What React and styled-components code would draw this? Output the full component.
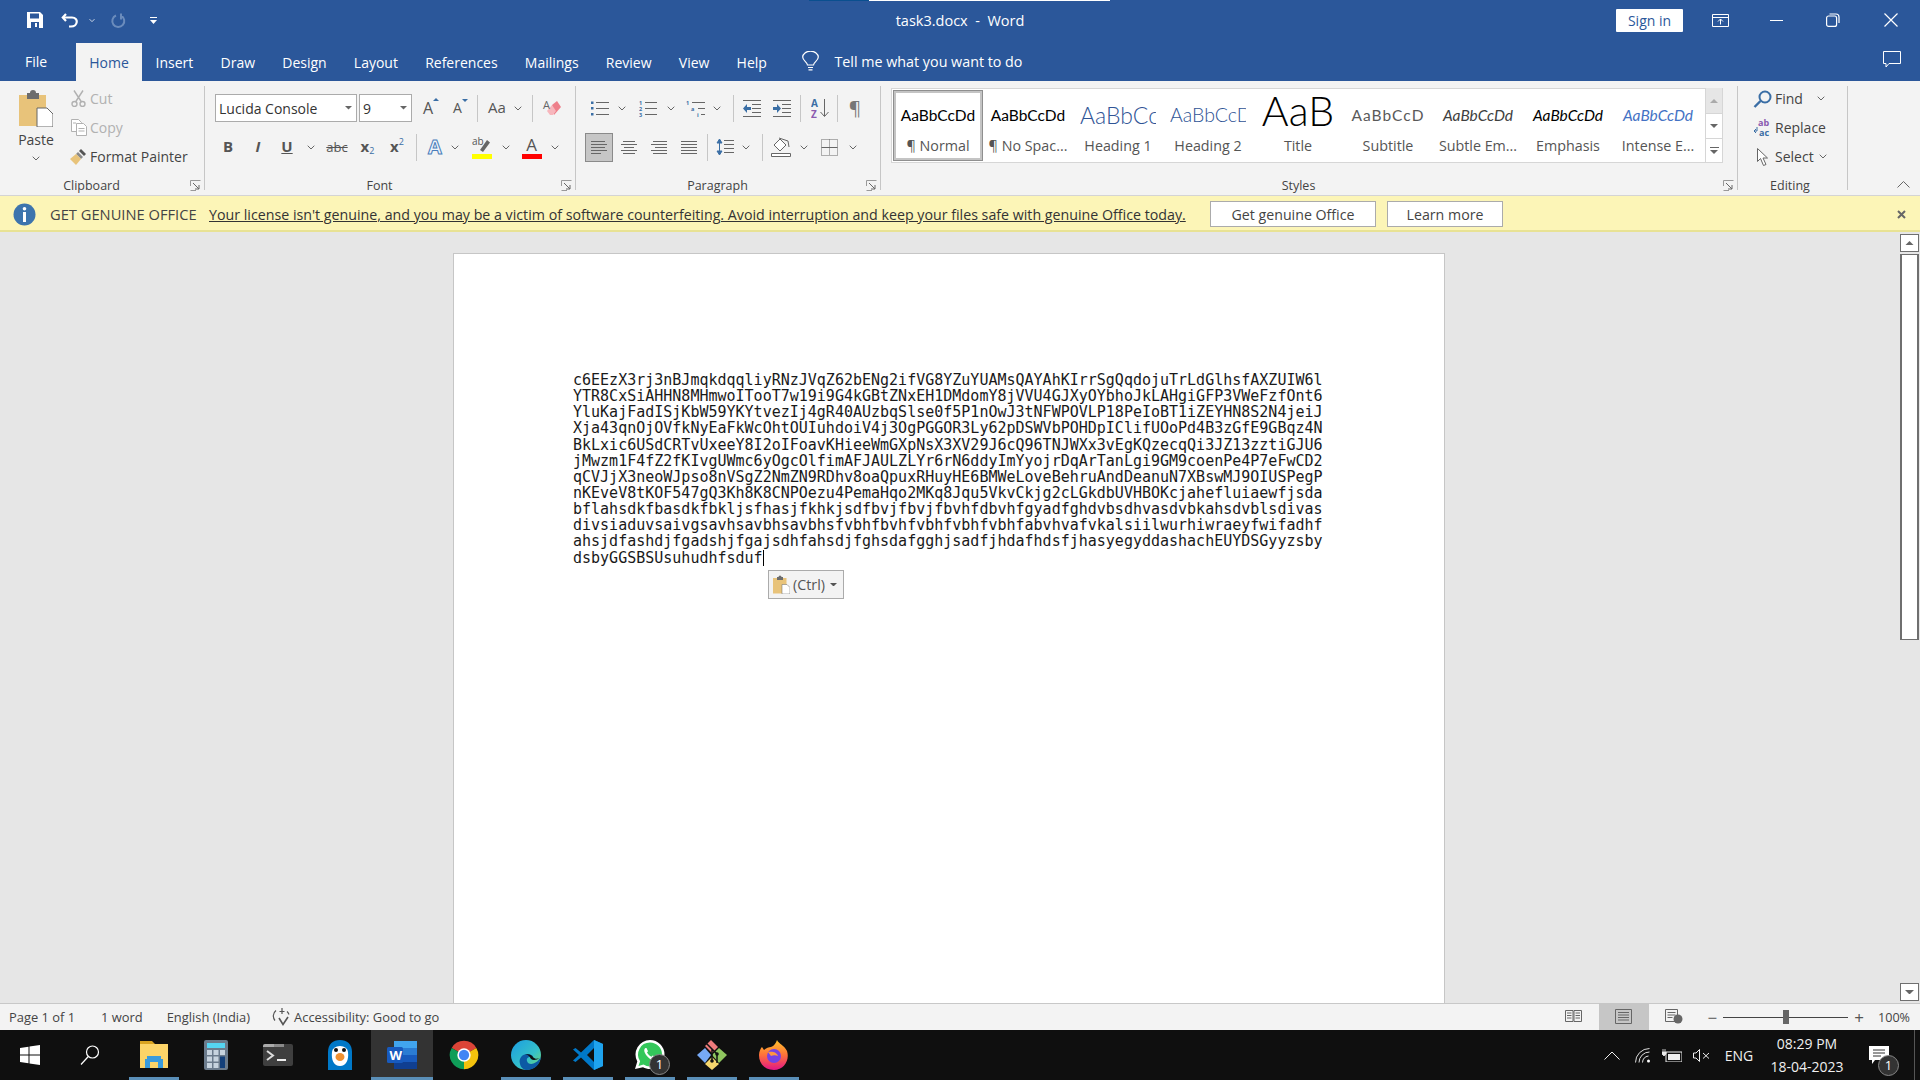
import React from 'react';
import styled, { createGlobalStyle } from 'styled-components';

const GlobalStyle = createGlobalStyle`
  html, body { margin: 0; padding: 0; background: #e6e6e6; }
  * { box-sizing: border-box; }
`;

const DOC_LINES = [
  'c6EEzX3rj3nBJmqkdqqliyRNzJVqZ62bENg2ifVG8YZuYUAMsQAYAhKIrrSgQqdojuTrLdGlhsfAXZUIW6l',
  'YTR8CxSiAHHN8MHmwoITooT7w19i9G4kGBtZNxEH1DMdomY8jVVU4GJXyOYbhoJkLAHgiGFP3VWeFzfOnt6',
  'YluKajFadISjKbW59YKYtvezIj4gR40AUzbqSlse0f5P1nOwJ3tNFWPOVLP18PeIoBT1iZEYHN8S2N4jeiJ',
  'Xja43qnOjOVfkNyEaFkWcOhtOUIuhdoiV4j3OgPGGOR3Ly62pDSWVbPOHDpIClifUOoPd4B3zGfE9GBqz4N',
  'BkLxic6USdCRTvUxeeY8I2oIFoavKHieeWmGXpNsX3XV29J6cQ96TNJWXx3vEgKQzecqQi3JZ13zztiGJU6',
  'jMwzm1F4fZ2fKIvgUWmc6yOgcOlfimAFJAULZLYr6rN6ddyImYyojrDqArTanLgi9GM9coenPe4P7eFwCD2',
  'qCVJjX3neoWJpso8nVSgZ2NmZN9RDhv8oaQpuxRHuyHE6BMWeLoveBehruAndDeanuN7XBswMJ9OIUSPegP',
  'nKEveV8tKOF547gQ3Kh8K8CNPOezu4PemaHqo2MKq8Jqu5VkvCkjg2cLGkdbUVHBOKcjahefluiaewfjsda',
  'bflahsdkfbasdkfbkljsfhasjfkhkjsdfbvjfbvjfbvhfdbvhfgyadfghdvbsdhvasdvbkahsdvblsdivas',
  'divsiaduvsaivgsavhsavbhsavbhsfvbhfbvhfvbhfvbhfvbhfabvhvafvkalsiilwurhiwraeyfwifadhf',
  'ahsjdfashdjfgadshjfgajsdhfahsdjfghsdafgghjsadfjhdafhdsfjhasyegyddashachEUYDSGyyzsby',
];

const TABS = ['Insert', 'Draw', 'Design', 'Layout', 'References', 'Mailings', 'Review', 'View', 'Help'];

const STYLES = [
  { name: '¶ Normal', kind: 'normal', selected: true },
  { name: '¶ No Spac...', kind: 'normal' },
  { name: 'Heading 1', kind: 'h1', text: 'AaBbCc' },
  { name: 'Heading 2', kind: 'h2', text: 'AaBbCcD' },
  { name: 'Title', kind: 'title', text: 'AaB' },
  { name: 'Subtitle', kind: 'subtitle', text: 'AaBbCcD' },
  { name: 'Subtle Em...', kind: 'subtle' },
  { name: 'Emphasis', kind: 'emphasis' },
  { name: 'Intense E...', kind: 'intense' },
];

const Page = styled.div`
  width: 1920px;
  height: 1080px;
  display: flex;
  flex-direction: column;
  overflow: hidden;
  font-family: 'Open Sans', 'Noto Sans', sans-serif;
  font-size: 14px;
  color: #444;
`;

/* title bar */
const TitleBar = styled.div`
  position: relative;
  height: 43px;
  flex: none;
  background: #2b579a;
  color: #fff;
  display: grid;
  grid-template-columns: 1fr auto 1fr;
  align-items: center;
  padding-bottom: 3px;
`;

const LoadStrip = styled.div`
  position: absolute;
  top: 0;
  left: 809px;
  width: 301px;
  height: 1px;
  background: linear-gradient(90deg, #0a4f8f 60px, #fff 60px);
`;

const QuickAccess = styled.div`
  display: flex;
  align-items: center;
  padding-left: 19px;
`;

const QuickBtn = styled.div`
  width: ${p => p.$w}px;
  display: flex;
  justify-content: center;
  align-items: center;
`;

const DocTitle = styled.div`
  white-space: pre;
  font-size: 14.5px;
`;

const WindowControls = styled.div`
  display: flex;
  justify-content: flex-end;
  align-items: center;
`;

const SignIn = styled.div`
  width: 67px;
  height: 23px;
  background: #fff;
  color: #2b579a;
  border-radius: 1px;
  text-align: center;
  line-height: 24px;
  font-size: 14px;
  margin-right: 29px;
`;

const WinBtn = styled.div`
  width: ${p => p.$w}px;
  margin-left: ${p => p.$ml || 0}px;
  display: flex;
  justify-content: center;
`;

/* tab row */
const TabBar = styled.div`
  height: 38px;
  flex: none;
  background: #2b579a;
  display: flex;
  align-items: stretch;
  color: #fff;
`;

const FileTab = styled.div`
  width: 76px;
  padding: 0 0 2px 25px;
  display: flex;
  align-items: center;
  font-size: 14px;
`;

const ActiveTab = styled.div`
  width: 66px;
  background: #f3f3f3;
  color: #2b579a;
  display: flex;
  align-items: center;
  justify-content: center;
`;

const Tab = styled.div`
  padding: 0 13.6px;
  display: flex;
  align-items: center;
  font-size: 14px;
`;

const TellMe = styled.div`
  display: flex;
  align-items: center;
  gap: 15px;
  margin-left: 22px;
  padding-bottom: 2px;
  font-size: 14.3px;
`;

const CommentBox = styled.div`
  margin-left: auto;
  padding: 0 19px 5px 0;
  display: flex;
  align-items: center;
`;

/* ribbon */
const Ribbon = styled.div`
  height: 115px;
  flex: none;
  background: #f3f3f3;
  border-bottom: 1px solid #d4d4d4;
  display: flex;
  align-items: flex-start;
`;

const Group = styled.div`
  width: ${p => p.$w}px;
  height: 104px;
  margin-top: 5px;
  flex: none;
  display: flex;
  flex-direction: column;
  border-right: 1px solid #c6c6c6;
`;

const GroupBody = styled.div`
  flex: 1;
  min-height: 0;
  display: flex;
`;

const GroupFooter = styled.div`
  height: 16px;
  margin-bottom: -3px;
  flex: none;
  display: flex;
  align-items: center;
  line-height: 16px;
  font-size: 12.5px;
  color: #444;
`;

const GroupName = styled.div`
  flex: 1;
  text-align: center;
  padding: 2px 5px 0 0;
`;

const Launcher = styled.div`
  width: 14px;
  margin-right: 2px;
  display: flex;
  justify-content: center;
`;

const PasteBtn = styled.div`
  width: 60px;
  margin-left: 6px;
  padding-top: 3px;
  display: flex;
  flex-direction: column;
  align-items: center;
  font-size: 14px;
  line-height: 18px;
  color: #444;
`;

const PasteLabel = styled.div`
  margin: 4px 0 7px;
`;

const SmallCol = styled.div`
  display: flex;
  flex-direction: column;
  margin-top: -2px;
  padding-left: ${p => p.$pl || 0}px;
`;

const SmallRow = styled.div`
  height: 29px;
  display: flex;
  align-items: center;
  white-space: nowrap;
  font-size: 14px;
  color: ${p => (p.$off ? '#b1b1b1' : '#444')};
`;

const SmallIcon = styled.div`
  width: ${p => p.$w || 23}px;
  flex: none;
  display: flex;
  justify-content: center;
`;

const ToolCol = styled.div`
  display: flex;
  flex-direction: column;
  padding: 8px 0 0 ${p => p.$pl}px;
  gap: 11px;
`;

const ToolRow = styled.div`
  height: 28px;
  margin-left: ${p => p.$ml || 0}px;
  display: flex;
  align-items: center;
`;

const Cell = styled.div`
  width: ${p => p.$w}px;
  height: 28px;
  flex: none;
  display: flex;
  align-items: center;
  justify-content: center;
  color: #555;
`;

const ActiveCell = styled(Cell)`
  height: 29px;
  margin-right: 1px;
  background: #c6c6c6;
  border: 1px solid #8a8a8a;
`;

const VSep = styled.div`
  width: 1px;
  height: 27px;
  flex: none;
  background: #c6c6c6;
  margin: 0 ${p => p.$r ?? 6}px 0 ${p => p.$l ?? 6}px;
`;

const ComboBox = styled.div`
  width: ${p => p.$w}px;
  height: 28px;
  margin-right: ${p => p.$mr || 0}px;
  flex: none;
  background: #fff;
  border: 1px solid #ababab;
  display: flex;
  align-items: center;
  justify-content: space-between;
  padding: 0 4px 0 3px;
  font-size: 14px;
  color: #333;
`;

const Letter = styled.span`
  font-size: ${p => p.$size || 15}px;
  font-weight: ${p => (p.$bold ? 700 : 400)};
  font-style: ${p => (p.$italic ? 'italic' : 'normal')};
  text-decoration: ${p => p.$deco || 'none'};
  color: ${p => p.$color || '#555'};
  line-height: 1.3;
`;

const SizeGlyph = styled.span`
  display: inline-flex;
  align-items: flex-start;
`;

const Outlined = styled.span`
  font-size: 20px;
  font-weight: 700;
  line-height: 1.3;
  color: #eef4fb;
  -webkit-text-stroke: 1px #4a7ebb;
`;

const Sup = styled.span`
  font-size: 9px;
  line-height: 1.2;
  color: #3a6ea5;
  align-self: ${p => (p.$up ? 'flex-start' : 'flex-end')};
`;

const ScriptGlyph = styled.span`
  display: inline-flex;
  height: 20px;
  align-items: center;
`;

const ColorGlyph = styled.div`
  display: flex;
  flex-direction: column;
  align-items: center;
  width: 20px;
  line-height: 1;
`;

const ColorLetter = styled.span`
  font-size: 17px;
  line-height: 18px;
  color: #555;
`;

const ColorBar = styled.div`
  width: 20px;
  height: 5px;
  background: ${p => p.$color};
`;

/* styles gallery */
const Gallery = styled.div`
  width: 832px;
  height: 75px;
  margin: 2px 0 0 10px;
  background: #fff;
  border: 1px solid #d6d6d6;
  display: flex;
  padding: 1px 0 1px 1px;
`;

const StyleItem = styled.div`
  width: 90px;
  height: 71px;
  flex: none;
  display: flex;
  flex-direction: column;
  align-items: center;
  border: 3px solid ${p => (p.$selected ? '#c4c4c4' : 'transparent')};
  outline: ${p => (p.$selected ? '1px solid #8f8f8f' : 'none')};
  outline-offset: -1px;
`;

const PREVIEW = {
  normal: 'font-size: 15.5px; color: #000;',
  h1: 'font-size: 23px; color: #2f5496; font-weight: 300;',
  h2: 'font-size: 19.5px; color: #2f5496; font-weight: 300;',
  title: 'font-size: 41px; color: #000; font-weight: 300; line-height: 35px;',
  subtitle: 'font-size: 15.5px; color: #5a5a5a; letter-spacing: 1px;',
  subtle: 'font-size: 15.5px; color: #404040; font-style: italic;',
  emphasis: 'font-size: 15.5px; color: #000; font-style: italic;',
  intense: 'font-size: 15.5px; color: #4472c4; font-style: italic;',
};

const Preview = styled.div`
  width: 76px;
  height: 42px;
  overflow: hidden;
  white-space: nowrap;
  font-family: Lato, 'Open Sans', sans-serif;
  line-height: 44px;
  text-align: center;
  ${p => PREVIEW[p.$kind]}
`;

const StyleName = styled.div`
  font-size: 14.3px;
  color: #555;
  white-space: nowrap;
  line-height: 20px;
  margin-top: 1px;
`;

const GalleryScroll = styled.div`
  margin: -2px -1px -2px auto;
  width: 18px;
  flex: none;
  display: flex;
  flex-direction: column;
  border-left: 1px solid #d6d6d6;
  border-right: 1px solid #d6d6d6;
`;

const ScrollPart = styled.div`
  flex: ${p => p.$grow || 1};
  display: flex;
  flex-direction: column;
  gap: 2px;
  align-items: center;
  justify-content: center;
  background: ${p => (p.$off ? '#e6e6e6' : '#fff')};
  border-bottom: 1px solid #d6d6d6;
`;

const MoreLine = styled.div`
  width: 9px;
  height: 1px;
  background: #666;
`;

const CollapseRibbon = styled.div`
  flex: 1;
  height: 110px;
  display: flex;
  align-items: flex-end;
  justify-content: flex-end;
  padding: 0 10px 3px 0;
`;

/* genuine office banner */
const Banner = styled.div`
  height: 36px;
  flex: none;
  background: #fcf5b7;
  border-bottom: 2px solid #e8e294;
  display: flex;
  align-items: center;
  padding: 2px 14px 0 13px;
  color: #444;
`;

const BannerTitle = styled.div`
  width: 147px;
  margin: 0 12px 0 14px;
  white-space: nowrap;
  color: #444;
  font-size: 14.7px;
`;

const BannerLink = styled.div`
  width: 977px;
  white-space: nowrap;
  color: #333;
  text-decoration: underline;
  font-size: 14.23px;
`;

const BannerButton = styled.div`
  width: ${p => p.$w}px;
  height: 26px;
  margin-left: ${p => p.$ml}px;
  background: #fff;
  border: 1px solid #ababab;
  text-align: center;
  line-height: 25px;
  font-size: 14.2px;
  color: #444;
`;

const BannerClose = styled.div`
  margin-left: auto;
  display: flex;
`;

/* document */
const Workspace = styled.div`
  flex: 1;
  min-height: 0;
  display: flex;
  background: #e6e6e6;
`;

const Canvas = styled.div`
  flex: 1;
  padding: 21px 0 0 453px;
  overflow: hidden;
`;

const Sheet = styled.div`
  position: relative;
  width: 992px;
  height: 100%;
  background: #fff;
  border: 1px solid #c6c6c6;
  border-bottom: none;
  padding: 118px 0 0 119px;
`;

const DocLine = styled.div`
  font-family: 'DejaVu Sans Mono', 'Liberation Mono', monospace;
  font-size: 15px;
  line-height: 16.15px;
  color: #1a1a1a;
  white-space: pre;
  height: 16.15px;
`;

const Caret = styled.span`
  display: inline-block;
  width: 1px;
  height: 16px;
  background: #000;
  vertical-align: -3px;
`;

const PasteOptions = styled.div`
  position: absolute;
  left: 314px;
  top: 316px;
  width: 76px;
  height: 29px;
  background: #f3f3f3;
  border: 1px solid #ababab;
  display: flex;
  align-items: center;
  gap: 3px;
  padding-left: 4px;
  font-size: 14.3px;
  color: #555;
`;

const PasteCaret = styled.span`
  display: flex;
  margin-left: 2px;
`;

const Scrollbar = styled.div`
  width: 19px;
  margin-right: 1px;
  flex: none;
  display: flex;
  flex-direction: column;
  padding: 2px 0;
`;

const ScrollArrow = styled.div`
  height: 18px;
  flex: none;
  background: #fff;
  border: 1px solid #6f6f6f;
  display: flex;
  align-items: center;
  justify-content: center;
`;

const ScrollThumb = styled.div`
  height: 386px;
  flex: none;
  margin-top: 2px;
  background: #fff;
  border: solid #6f6f6f;
  border-width: 1px 2px;
`;

const ScrollTrack = styled.div`
  flex: 1;
`;

/* status bar */
const StatusBar = styled.div`
  height: 27px;
  flex: none;
  background: #f3f3f3;
  border-top: 1px solid #c8c8c8;
  display: flex;
  align-items: stretch;
  font-size: 12.9px;
  color: #444;
`;

const StatusText = styled.div`
  display: flex;
  align-items: center;
  gap: 2px;
  margin-left: ${p => p.$ml}px;
  white-space: nowrap;
`;

const StatusRight = styled.div`
  margin-left: auto;
  display: flex;
  align-items: stretch;
`;

const ViewBtn = styled.div`
  width: 50px;
  margin-top: -1px;
  display: flex;
  align-items: center;
  justify-content: center;
  background: ${p => (p.$active ? '#c6c6c6' : 'transparent')};
`;

const ZoomBox = styled.div`
  display: flex;
  align-items: center;
  padding: 0 10px 0 9px;
  gap: 6px;
`;

const ZoomSign = styled.span`
  font-size: 17px;
  line-height: 1;
  color: #555;
`;

const ZoomTrack = styled.div`
  width: 125px;
  height: 1px;
  background: #444;
  display: flex;
  align-items: center;
  padding-left: 60px;
`;

const ZoomThumb = styled.div`
  width: 6px;
  height: 14px;
  flex: none;
  background: #666;
`;

const ZoomValue = styled.div`
  margin-left: 8px;
  font-size: 12.6px;
`;

/* taskbar */
const Taskbar = styled.div`
  height: 50px;
  flex: none;
  background: #0f0f0f;
  display: flex;
  align-items: stretch;
  color: #f0f0f0;
`;

const TaskSlot = styled.div`
  position: relative;
  width: ${p => p.$w || 62}px;
  flex: none;
  display: flex;
  align-items: center;
  justify-content: center;
  background: ${p => (p.$active ? '#333' : 'transparent')};
  ${p =>
    p.$open
      ? `background-image: linear-gradient(#5a8fb8, #5a8fb8);
         background-repeat: no-repeat;
         background-position: center bottom;
         background-size: ${p.$active ? '100%' : '50px'} 3px;`
      : ''}
`;

const SlotGap = styled.div`
  width: 3px;
  flex: none;
`;

const CountBadge = styled.div`
  position: absolute;
  width: 21px;
  height: 21px;
  left: ${p => p.$left}px;
  top: ${p => p.$top}px;
  border-radius: 50%;
  background: #333;
  border: 1px solid #888;
  color: #fff;
  font-size: 13px;
  line-height: 19px;
  text-align: center;
`;

const Tray = styled.div`
  margin-left: auto;
  display: flex;
  align-items: center;
`;

const TrayIcon = styled.div`
  width: ${p => p.$w}px;
  display: flex;
  justify-content: center;
`;

const TrayLang = styled.div`
  width: 36px;
  text-align: center;
  font-size: 14px;
  white-space: nowrap;
`;

const Clock = styled.div`
  width: 100px;
  text-align: center;
  font-size: 14px;
  line-height: 23px;
`;

const Notify = styled.div`
  position: relative;
  width: 44px;
  height: 100%;
  margin-right: 13px;
  display: flex;
  align-items: center;
  justify-content: center;
`;

const ShowDesktop = styled.div`
  width: 6px;
  height: 100%;
  border-left: 1px solid #555;
`;

/* icons */
const Chevron = ({ color = '#666' }) => (
  <svg width="8" height="5" viewBox="0 0 8 5"><path d="M.7.7 4 4 7.3.7" fill="none" stroke={color} /></svg>
);

const Tri = ({ color = '#666', up, w = 8 }) => (
  <svg width={w} height={w / 2} viewBox="0 0 8 4"><path d={up ? 'M0 4 4 0l4 4z' : 'M0 0h8L4 4z'} fill={color} /></svg>
);

const LauncherIcon = () => (
  <svg width="11" height="11" viewBox="0 0 11 11" fill="none" stroke="#666">
    <path d="M.5 6V.5H10.500M.5 10.500H6" stroke="#999" />
    <path d="M3 3 9 9M9 5v4H5" />
  </svg>
);

const SaveIcon = () => (
  <svg width="16" height="16" viewBox="0 0 16 16">
    <path d="M0 0h13l3 3v13H0z" fill="#fff" />
    <path d="M3 1.500h9v5H3z" fill="#2b579a" />
    <path d="M4 10h8v6H4z" fill="#2b579a" />
    <path d="M8 11h2v4H8z" fill="#fff" />
  </svg>
);

const UndoIcon = () => (
  <svg width="18" height="16" viewBox="0 0 18 16" fill="none" stroke="#fff" strokeWidth="2.200">
    <path d="M5 2 1.800 5.500 5 9" />
    <path d="M2 5.500h9c7 0 6 9-1 9H8" />
  </svg>
);

const RedoIcon = () => (
  <svg width="17" height="17" viewBox="0 0 17 17" fill="none" stroke="#6b8cbc" strokeWidth="2">
    <path d="M11 1.500v5h-1M6 3.500a6 6 0 1 0 5 .2" />
  </svg>
);

const CustomizeIcon = () => (
  <svg width="7" height="7" viewBox="0 0 7 7" fill="#fff"><path d="M0 0h7v1H0zM0 3h7L3.500 7z" /></svg>
);

const RibbonModeIcon = () => (
  <svg width="17" height="13" viewBox="0 0 17 13" fill="none" stroke="#fff">
    <path d="M.5.500h16v12H.5zM.5 3.500h16" />
    <path d="M8.500 10.500V5M6 7.500l2.500-2.500L11 7.500" />
  </svg>
);

const MinIcon = () => <svg width="13" height="13" viewBox="0 0 13 13"><path d="M0 6.500h13" stroke="#fff" /></svg>;

const RestoreIcon = () => (
  <svg width="14" height="14" viewBox="0 0 14 14" fill="none" stroke="#fff" strokeWidth="1.200">
    <rect x=".6" y="3" width="10" height="10.400" rx="2" />
    <path d="M3.500 1h6.500a3 3 0 0 1 3 3v6" />
  </svg>
);

const CloseIcon = () => (
  <svg width="14" height="14" viewBox="0 0 14 14"><path d="M.5.500l13 13M13.500.500l-13 13" stroke="#fff" strokeWidth="1.200" /></svg>
);

const BulbIcon = () => (
  <svg width="17" height="20" viewBox="0 0 17 20" fill="none" stroke="#fff" strokeWidth="1.200">
    <path d="M5.500 14c0-3-4.800-4-4.800-8a7.800 5.800 0 0 1 15.600 0c0 4-4.800 5-4.800 8z" />
    <path d="M6 16.500h5M6.500 18.800h4" />
  </svg>
);

const CommentIcon = () => (
  <svg width="18" height="17" viewBox="0 0 18 17" fill="none" stroke="#fff"><path d="M.5.500h17v12H6L3 16v-3.500H.5z" /></svg>
);

const PasteIcon = ({ small }) => (
  <svg width={small ? 17 : 34} height={small ? 19 : 38} viewBox="0 0 34 38">
    <path d="M0 6h27v31H0z" fill="#e8c37a" />
    <path d="M8 4h3a3 3 0 0 1 6 0h3v6H8z" fill="#6d6d6d" />
    <path d="M18 19h10l6 6v13H18z" fill="#fff" stroke="#666" />
  </svg>
);

const ScissorsIcon = () => (
  <svg width="15" height="17" viewBox="0 0 15 17" fill="none" stroke="#b1b1b1" strokeWidth="1.400">
    <circle cx="3.500" cy="14" r="2.500" />
    <circle cx="11.500" cy="14" r="2.500" />
    <path d="M4.500 12 12 .5M10.500 12 3 .5" />
  </svg>
);

const CopyIcon = () => (
  <svg width="16" height="17" viewBox="0 0 16 17" fill="#fff" stroke="#b1b1b1">
    <path d="M.5.500h7l3 3v9h-10z" />
    <path d="M5.500 4.500h7l3 3v9h-10zM7.500 9.500h6M7.500 12h6M2 4h3" />
  </svg>
);

const BrushIcon = () => (
  <svg width="18" height="18" viewBox="0 0 18 18">
    <path d="M11 1l5 5-2 2-5-5z" fill="#555" />
    <path d="M8 4l5 5-2 2-5-5z" fill="#8a8a8a" />
    <path d="M6 6l5 5-5 6-6-6z" fill="#e8c37a" />
  </svg>
);

const ClearFormatIcon = () => (
  <svg width="19" height="22" viewBox="0 0 19 22">
    <path d="M10 8l5-4 4 6-7 8z" fill="#ee7f8a" />
    <path d="M5 14l5-6 4 6-3 4H8z" fill="#f7b6bc" />
    <text x="1" y="12" fontSize="11" fill="#666" fontFamily="Open Sans">A</text>
  </svg>
);

const BulletsIcon = () => (
  <svg width="19" height="17" viewBox="0 0 19 17">
    <path d="M1 1.500h2.500v2.500H1zM1 7h2.500v2.500H1zM1 13h2.500v2.500H1z" fill="#3a6ea5" />
    <path d="M6 2.500h13M6 8.500h13M6 14.500h13" stroke="#666" />
  </svg>
);

const NumberingIcon = () => (
  <svg width="18" height="21" viewBox="0 0 18 21">
    <g fontSize="5.500" fontWeight="700" fill="#3a6ea5" fontFamily="Open Sans">
      <text x="0" y="7">1</text><text x="0" y="13">2</text><text x="0" y="19">3</text>
    </g>
    <path d="M6 4.500h12M6 10.500h12M6 16.500h12" stroke="#666" />
  </svg>
);

const MultilevelIcon = () => (
  <svg width="19" height="21" viewBox="0 0 19 21">
    <g fontSize="5.500" fontWeight="700" fill="#3a6ea5" fontFamily="Open Sans">
      <text x="0" y="7">1</text><text x="5" y="13">a</text><text x="11" y="19">i</text>
    </g>
    <path d="M6 4.500h13M12 10.500h7M15 16.500h4" stroke="#666" />
  </svg>
);

const IndentIcon = ({ flip }) => (
  <svg width="18" height="17" viewBox="0 0 18 17">
    <path d="M0 .500h18M9 4.500h9M9 8.500h9M9 12.500h9M0 16.500h18" stroke="#666" />
    {flip
      ? <path d="M0 7h4V4l4 4.500-4 4.500v-3H0z" fill="#3a6ea5" />
      : <path d="M8 7H4V4L0 8.500 4 13v-3h4z" fill="#3a6ea5" />}
  </svg>
);

const SortIcon = () => (
  <svg width="18" height="24" viewBox="0 0 18 24">
    <text x="0" y="11" fontSize="10" fontWeight="700" fill="#3a6ea5" fontFamily="Open Sans">A</text>
    <text x="0" y="22" fontSize="10" fontWeight="700" fill="#8a5aaf" fontFamily="Open Sans">Z</text>
    <path d="M13.500 3v17M9.500 16l4 4.500 4-4.500" fill="none" stroke="#666" />
  </svg>
);

const AlignIcon = ({ kind }) => {
  const rows = { left: [14, 18, 14, 18, 10], center: [12, 16, 10, 16, 12], right: [14, 16, 12, 16, 14], justify: [16, 16, 16, 16, 16] }[kind];
  return (
    <svg width="16" height="15" viewBox="0 0 16 15">
      {rows.map((w, i) => {
        const x = kind === 'left' ? 0 : kind === 'right' ? 16 - w : (16 - w) / 2;
        return <path key={i} d={`M${x} ${1.5 + i * 3}h${w}`} stroke="#666" />;
      })}
    </svg>
  );
};

const LineSpacingIcon = () => (
  <svg width="18" height="18" viewBox="0 0 18 18">
    <path d="M3.500 5v8M1 5l2.500-4L6 5zM1 13l2.500 4L6 13z" fill="#3a6ea5" stroke="#3a6ea5" />
    <path d="M8 2.500h10M8 6.500h10M8 10.500h10M8 14.500h10" stroke="#666" />
  </svg>
);

const ShadingIcon = () => (
  <svg width="20" height="20" viewBox="0 0 20 20" fill="none" stroke="#666">
    <path d="M3 8l6-6 6 6-6 6z" fill="#fff" />
    <path d="M8 1l9 3 1 6" />
    <path d="M.5 16.500h19v3H.5z" fill="#fff" />
  </svg>
);

const BordersIcon = () => (
  <svg width="17" height="17" viewBox="0 0 17 17" fill="none" stroke="#666" strokeDasharray="1 1">
    <path d="M.5.500h16v16H.5zM8.500.500v16" />
    <path d="M.5 8.500h16" strokeDasharray="none" />
  </svg>
);

const HighlightIcon = () => (
  <svg width="20" height="24" viewBox="0 0 20 24">
    <text x="0" y="10" fontSize="10" fill="#555" fontFamily="Open Sans">ab</text>
    <path d="M8 15 15 5l3 2.500L11 17z" fill="#666" />
    <path d="M0 19h20v5H0z" fill="#ffff00" />
  </svg>
);

const FindIcon = () => (
  <svg width="19" height="18" viewBox="0 0 19 18" fill="none" stroke="#3a6ea5" strokeWidth="2">
    <circle cx="12" cy="7" r="5.500" />
    <path d="M7.500 11 1.500 17" strokeWidth="2.400" />
  </svg>
);

const ReplaceIcon = () => (
  <svg width="20" height="22" viewBox="0 0 20 22">
    <text x="5" y="9" fontSize="9" fontWeight="700" fill="#8a5aaf" fontFamily="Open Sans">ab</text>
    <text x="6" y="19" fontSize="9" fontWeight="700" fill="#3a6ea5" fontFamily="Open Sans">ac</text>
    <path d="M4 10v4H1M1 14l2-2M1 14l2 2" fill="none" stroke="#3a6ea5" />
  </svg>
);

const CursorIcon = () => (
  <svg width="12" height="18" viewBox="0 0 12 18"><path d="M.5.500v13l3-3 3 7 2.500-1-3-6.500h4.500z" fill="#fff" stroke="#666" /></svg>
);

const InfoIcon = () => (
  <svg width="23" height="23" viewBox="0 0 23 23">
    <circle cx="11.500" cy="11.500" r="11" fill="#3d74ad" />
    <path d="M10 9h3v10h-3z" fill="#fff" />
    <circle cx="11.500" cy="5.800" r="1.800" fill="#fff" />
  </svg>
);

const BannerX = () => (
  <svg width="9" height="9" viewBox="0 0 9 9"><path d="M1 1l7 7M8 1 1 8" stroke="#666" strokeWidth="2" /></svg>
);

const CollapseIcon = () => (
  <svg width="13" height="7" viewBox="0 0 13 7"><path d="M.5 6.500l6-6 6 6" fill="none" stroke="#666" /></svg>
);

const AccessibilityIcon = () => (
  <svg width="20" height="18" viewBox="0 0 20 18" fill="none" stroke="#555" strokeWidth="1.200">
    <path d="M4 2.500a7 7 0 0 0-1 10M15 3.500a7 7 0 0 1 2 3" />
    <path d="M10 0v6M7.500 3.500h5" />
    <path d="M7 10l4 6.500L16 9" strokeWidth="1.600" />
  </svg>
);

const ReadIcon = () => (
  <svg width="17" height="15" viewBox="0 0 17 15" fill="none" stroke="#666">
    <path d="M.5 1.500h7.500v11H.5zM9 1.500h7.500v11H9zM2 4h4.500M2 6.500h4.500M2 9h4.500M10.500 4H15M10.500 6.500H15M10.500 9H15" />
  </svg>
);

const PrintIcon = () => (
  <svg width="17" height="15" viewBox="0 0 17 15" fill="none" stroke="#666">
    <path d="M.5.500h16v14H.5zM3 3.500h11M3 6h11M3 8.500h11M3 11h11" />
  </svg>
);

const WebIcon = () => (
  <svg width="18" height="15" viewBox="0 0 18 15">
    <path d="M.5.500h12v12H.5zM2.500 3.500h8M2.500 6h8M2.500 8.500h5" fill="none" stroke="#666" />
    <circle cx="13" cy="10" r="4.500" fill="#666" />
  </svg>
);

const WindowsLogo = () => (
  <svg width="20" height="20" viewBox="0 0 20 20" fill="#fff">
    <path d="M0 3l8.500-1.300v7.800H0zM9.500 1.500 20 0v9.500H9.500zM0 10.500h8.500v7.800L0 17zM9.500 10.500H20V20L9.500 18.500z" />
  </svg>
);

const SearchGlyph = () => (
  <svg width="20" height="20" viewBox="0 0 20 20" fill="none" stroke="#fff" strokeWidth="1.200">
    <circle cx="12.500" cy="7" r="6" />
    <path d="M8.300 11.500 1 19.500" />
  </svg>
);

const ExplorerLogo = () => (
  <svg width="28" height="30" viewBox="0 0 28 30">
    <path d="M0 1h12l3 3H0z" fill="#d9a320" />
    <path d="M0 4h28v24H0z" fill="#fcd468" />
    <path d="M7 16h14v3h2v9h-5v-6h-8v6H5v-9h2z" fill="#3a9bdc" />
  </svg>
);

const CalcLogo = () => (
  <svg width="24" height="30" viewBox="0 0 24 30">
    <rect width="24" height="30" rx="2" fill="#6b7b8c" />
    <path d="M3 3h18v5H3z" fill="#55d5f2" />
    <path d="M3 10h5v5H3zM9.500 10h5v5h-5zM16 10h5v5h-5zM3 16.500h5v5H3zM9.500 16.500h5v5h-5zM3 23h5v5H3zM9.500 23h5v5h-5z" fill="#c7d3de" />
    <path d="M16 16.500h5V28h-5z" fill="#123f7a" />
  </svg>
);

const TerminalLogo = () => (
  <svg width="30" height="22" viewBox="0 0 30 22">
    <rect width="30" height="22" rx="2" fill="#3f3f3f" />
    <path d="M0 2a2 2 0 0 1 2-2h9v3H0z" fill="#aaa" />
    <path d="M11 0h10v3H11z" fill="#8a8a8a" />
    <path d="M4 7l6 4.500-6 4.500" fill="none" stroke="#ddd" strokeWidth="2" />
    <path d="M14 15h9v2h-9z" fill="#eee" />
  </svg>
);

const PenguinLogo = () => (
  <svg width="24" height="30" viewBox="0 0 24 30">
    <path d="M0 12C0 4 5 0 12 0s12 4 12 12v18H0z" fill="#0078c8" />
    <path d="M4 12a8 6 0 0 1 16 0c1 8-2 14-8 14S3 20 4 12z" fill="#fff" />
    <circle cx="8" cy="10" r="2" fill="#111" />
    <circle cx="16" cy="10" r="2" fill="#111" />
    <ellipse cx="12" cy="17" rx="4.500" ry="4" fill="#f09030" />
  </svg>
);

const WordLogo = () => (
  <svg width="30" height="30" viewBox="0 0 30 30">
    <path d="M7 1h23v7H7z" fill="#41a5ee" />
    <path d="M7 8h23v7H7z" fill="#2b7cd3" />
    <path d="M7 15h23v7H7z" fill="#185abd" />
    <path d="M7 22h23v7H7z" fill="#103f91" />
    <rect x="0" y="7" width="16" height="16" rx="1.500" fill="#185abd" />
    <text x="2.500" y="20" fontSize="13" fontWeight="700" fill="#fff" fontFamily="Open Sans">W</text>
  </svg>
);

const ChromeLogo = () => (
  <svg width="30" height="30" viewBox="0 0 38 38">
    <path d="M19 19 3.400 10A18 18 0 0 1 34.600 10z" fill="#db4437" />
    <path d="M19 19 34.600 10A18 18 0 0 1 19 37z" fill="#f4c20d" />
    <path d="M19 19V37A18 18 0 0 1 3.400 10z" fill="#0f9d58" />
    <circle cx="19" cy="19" r="8.500" fill="#fff" />
    <circle cx="19" cy="19" r="6.500" fill="#4285f4" />
  </svg>
);

const EdgeLogo = () => (
  <svg width="30" height="30" viewBox="0 0 30 30">
    <defs>
      <linearGradient id="edgeFill" x1="0" y1="0" x2="1" y2="1">
        <stop offset="0" stopColor="#1b9de2" />
        <stop offset="0.6" stopColor="#35c1c9" />
        <stop offset="1" stopColor="#7bdd6b" />
      </linearGradient>
    </defs>
    <circle cx="15" cy="15" r="15" fill="url(#edgeFill)" />
    <path d="M30 17c-1 8-7 13-14 13-3 0-6-2-7-6-2-6 3-10 7-10 4 0 6 2 6 3-4-1-7 1-6 4 1 4 8 5 14-4z" fill="#0c59a4" />
    <path d="M14 14c4 0 7 1 8 3 2 3 8 2 8-2 0 2-3 5-7 5-5 0-2-4-9-6z" fill="#0f0f0f" />
  </svg>
);

const VSCodeLogo = () => (
  <svg width="30" height="30" viewBox="0 0 30 30">
    <path d="M21 0l9 4v22l-9 4L8 17.500 2.500 22 0 20.500 6 15 0 9.500 2.500 8 8 12.500z" fill="#0078c8" />
    <path d="M21 0l9 4v22l-9 4z" fill="#1fa3ee" />
    <path d="M21 8l-7 7 7 7z" fill="#0f0f0f" />
  </svg>
);

const WhatsAppLogo = () => (
  <svg width="30" height="30" viewBox="0 0 30 30">
    <path d="M15 0a14.500 14.500 0 0 1 0 29c-2.500 0-5-.7-7-1.800L0 29l2.300-7.500A14.500 14.500 0 0 1 15 0z" fill="#fff" />
    <path d="M15 2.500a12 12 0 0 1 0 24c-2.400 0-4.500-.7-6.500-2l-5 1.500 1.600-4.800A12 12 0 0 1 15 2.500z" fill="#34c75a" />
    <path d="M10.500 8c-2 1.500-1.500 4 1 7.500s6 5 8 4c1-.5 1.500-2 1.200-2.500l-3-1.500-1.200 1.300c-2-.8-3.500-2.500-4.500-4.300l1-1.200-1.500-3.300z" fill="#fff" />
  </svg>
);

const GitLogo = () => (
  <svg width="30" height="30" viewBox="0 0 30 30">
    <path d="M14 0 21 7 15 13 8 6z" fill="#ef7b7b" />
    <path d="M22 8 30 15 22 23 15 15z" fill="#8fc65f" />
    <path d="M15 17 22 24 15 30 8 24z" fill="#f5d76e" />
    <path d="M8 8 14 15 8 23 0 15z" fill="#76a9f5" />
    <path d="M9 3l11 11v9M15 9v12" fill="none" stroke="#111" strokeWidth="1.500" />
    <circle cx="15" cy="21" r="1.800" fill="#111" />
    <circle cx="20" cy="14" r="1.800" fill="#111" />
  </svg>
);

const FirefoxLogo = () => (
  <svg width="30" height="30" viewBox="0 0 30 30">
    <defs>
      <linearGradient id="foxFill" x1="0.500" y1="0" x2="0.500" y2="1">
        <stop offset="0" stopColor="#ffc32b" />
        <stop offset="0.5" stopColor="#ff7139" />
        <stop offset="1" stopColor="#e31587" />
      </linearGradient>
    </defs>
    <path d="M18 0c2 4 7 5 10 11 3 9-3 19-13 19S0 23 0 15c0-4 2-7 3-8l2 3c2-2 5-3 7-3 3-1 5-4 6-7z" fill="url(#foxFill)" />
    <circle cx="15" cy="16" r="7" fill="#7542e5" />
    <path d="M9 12c4-1 9 0 10 4-2-1-5-1-7 0z" fill="#ff9640" />
  </svg>
);

const TrayCaret = () => (
  <svg width="16" height="9" viewBox="0 0 16 9"><path d="M.5 8.500 8 1l7.500 7.500" fill="none" stroke="#eee" /></svg>
);

const WifiIcon = () => (
  <svg width="16" height="15" viewBox="0 0 16 15" fill="none" stroke="#ddd">
    <path d="M.5 14.500a14 14 0 0 1 14-14M4 14.500a10.500 10.500 0 0 1 10.500-10.500M7.500 14.500a7 7 0 0 1 6-6.500" />
    <circle cx="13.500" cy="13" r="1.500" fill="#fff" stroke="none" />
  </svg>
);

const BatteryIcon = () => (
  <svg width="20" height="13" viewBox="0 0 20 13">
    <path d="M4 3h16v10H4z" fill="none" stroke="#eee" />
    <path d="M6 5h12v6H6z" fill="#eee" />
    <path d="M1 0v3M3 0v3M0 3h4v2L2 7 0 5z" stroke="#eee" fill="#eee" strokeWidth=".8" />
  </svg>
);

const MuteIcon = () => (
  <svg width="18" height="13" viewBox="0 0 18 13" fill="none" stroke="#eee">
    <path d="M.5 4h2.500L6.500.500v12L3 9H.5zM10 4l6 5.500M16 4l-6 5.500" />
  </svg>
);

const NotifyIcon = () => (
  <svg width="20" height="19" viewBox="0 0 20 19">
    <path d="M0 0h20v14H6l-3 4v-4H0z" fill="#fff" />
    <path d="M4 4h12M4 7h12M4 10h8" stroke="#333" />
  </svg>
);

const StyleGallery = () => (
  <Gallery>
    {STYLES.map(s => (
      <StyleItem key={s.name} $selected={s.selected}>
        <Preview $kind={s.kind}>{s.text || 'AaBbCcDd'}</Preview>
        <StyleName>{s.name}</StyleName>
      </StyleItem>
    ))}
    <GalleryScroll>
      <ScrollPart $off $grow={26}><Tri up color="#aaa" /></ScrollPart>
      <ScrollPart $grow={24}><Tri color="#666" /></ScrollPart>
      <ScrollPart $grow={24}><MoreLine /><Tri color="#666" /></ScrollPart>
    </GalleryScroll>
  </Gallery>
);

const App = () => (
  <Page>
    <GlobalStyle />
    <TitleBar>
      <LoadStrip />
      <QuickAccess>
        <QuickBtn $w={32}><SaveIcon /></QuickBtn>
        <QuickBtn $w={38}><UndoIcon /></QuickBtn>
        <QuickBtn $w={6}><Chevron color="#fff" /></QuickBtn>
        <QuickBtn $w={46}><RedoIcon /></QuickBtn>
        <QuickBtn $w={24}><CustomizeIcon /></QuickBtn>
      </QuickAccess>
      <DocTitle>{'task3.docx  -  Word'}</DocTitle>
      <WindowControls>
        <SignIn>Sign in</SignIn>
        <WinBtn $w={17}><RibbonModeIcon /></WinBtn>
        <WinBtn $w={95}><MinIcon /></WinBtn>
        <WinBtn $w={18}><RestoreIcon /></WinBtn>
        <WinBtn $w={58} $ml={20}><CloseIcon /></WinBtn>
      </WindowControls>
    </TitleBar>

    <TabBar>
      <FileTab>File</FileTab>
      <ActiveTab>Home</ActiveTab>
      {TABS.map(t => <Tab key={t}>{t}</Tab>)}
      <TellMe><BulbIcon />Tell me what you want to do</TellMe>
      <CommentBox><CommentIcon /></CommentBox>
    </TabBar>

    <Ribbon>
      <Group $w={205}>
        <GroupBody>
          <PasteBtn>
            <PasteIcon />
            <PasteLabel>Paste</PasteLabel>
            <Chevron />
          </PasteBtn>
          <SmallCol $pl={1}>
            <SmallRow $off><SmallIcon><ScissorsIcon /></SmallIcon>Cut</SmallRow>
            <SmallRow $off><SmallIcon><CopyIcon /></SmallIcon>Copy</SmallRow>
            <SmallRow><SmallIcon><BrushIcon /></SmallIcon>Format Painter</SmallRow>
          </SmallCol>
        </GroupBody>
        <GroupFooter>
          <GroupName>Clipboard</GroupName>
          <Launcher><LauncherIcon /></Launcher>
        </GroupFooter>
      </Group>

      <Group $w={371}>
        <GroupBody>
          <ToolCol $pl={10}>
            <ToolRow>
              <ComboBox $w={142} $mr={2}>Lucida Console<Tri w={7} /></ComboBox>
              <ComboBox $w={53}>9<Tri w={7} /></ComboBox>
              <Cell $w={38}><SizeGlyph><Letter $size={16}>A</Letter><Tri up color="#3a6ea5" w={6} /></SizeGlyph></Cell>
              <Cell $w={21}><SizeGlyph><Letter $size={14}>A</Letter><Tri color="#3a6ea5" w={6} /></SizeGlyph></Cell>
              <VSep />
              <Cell $w={26}><Letter $size={15}>Aa</Letter></Cell>
              <Cell $w={16}><Chevron /></Cell>
              <VSep />
              <Cell $w={24}><ClearFormatIcon /></Cell>
            </ToolRow>
            <ToolRow $ml={-2}>
              <Cell $w={30}><Letter $bold>B</Letter></Cell>
              <Cell $w={30}><Letter $bold $italic>I</Letter></Cell>
              <Cell $w={28}><Letter $bold $deco="underline">U</Letter></Cell>
              <Cell $w={20}><Chevron /></Cell>
              <Cell $w={32}><Letter $size={13} $deco="line-through">abc</Letter></Cell>
              <Cell $w={29}><ScriptGlyph><Letter $bold>x</Letter><Sup>2</Sup></ScriptGlyph></Cell>
              <Cell $w={30}><ScriptGlyph><Letter $bold>x</Letter><Sup $up>2</Sup></ScriptGlyph></Cell>
              <VSep $l={4} $r={8} />
              <Cell $w={20}><Outlined>A</Outlined></Cell>
              <Cell $w={20}><Chevron /></Cell>
              <Cell $w={34}><HighlightIcon /></Cell>
              <Cell $w={14}><Chevron /></Cell>
              <Cell $w={37}>
                <ColorGlyph><ColorLetter>A</ColorLetter><ColorBar $color="#ff0000" /></ColorGlyph>
              </Cell>
              <Cell $w={10}><Chevron /></Cell>
            </ToolRow>
          </ToolCol>
        </GroupBody>
        <GroupFooter>
          <GroupName>Font</GroupName>
          <Launcher><LauncherIcon /></Launcher>
        </GroupFooter>
      </Group>

      <Group $w={305}>
        <GroupBody>
          <ToolCol $pl={9}>
            <ToolRow>
              <Cell $w={28}><BulletsIcon /></Cell>
              <Cell $w={18}><Chevron /></Cell>
              <Cell $w={34}><NumberingIcon /></Cell>
              <Cell $w={12}><Chevron /></Cell>
              <Cell $w={36}><MultilevelIcon /></Cell>
              <Cell $w={8}><Chevron /></Cell>
              <VSep $l={12} $r={3} />
              <Cell $w={30}><IndentIcon /></Cell>
              <Cell $w={30}><IndentIcon flip /></Cell>
              <VSep $l={3} $r={3} />
              <Cell $w={32}><SortIcon /></Cell>
              <VSep $l={1} $r={3} />
              <Cell $w={28}><Letter $size={19} $color="#777">¶</Letter></Cell>
            </ToolRow>
            <ToolRow>
              <ActiveCell $w={28}><AlignIcon kind="left" /></ActiveCell>
              <Cell $w={30}><AlignIcon kind="center" /></Cell>
              <Cell $w={30}><AlignIcon kind="right" /></Cell>
              <Cell $w={30}><AlignIcon kind="justify" /></Cell>
              <VSep $l={3} $r={3} />
              <Cell $w={28}><LineSpacingIcon /></Cell>
              <Cell $w={14}><Chevron /></Cell>
              <VSep $l={9} $r={3} />
              <Cell $w={30}><ShadingIcon /></Cell>
              <Cell $w={16}><Chevron /></Cell>
              <Cell $w={34}><BordersIcon /></Cell>
              <Cell $w={14}><Chevron /></Cell>
            </ToolRow>
          </ToolCol>
        </GroupBody>
        <GroupFooter>
          <GroupName>Paragraph</GroupName>
          <Launcher><LauncherIcon /></Launcher>
        </GroupFooter>
      </Group>

      <Group $w={857}>
        <GroupBody><StyleGallery /></GroupBody>
        <GroupFooter>
          <GroupName>Styles</GroupName>
          <Launcher><LauncherIcon /></Launcher>
        </GroupFooter>
      </Group>

      <Group $w={110}>
        <GroupBody>
          <SmallCol $pl={12}>
            <SmallRow><SmallIcon $w={25}><FindIcon /></SmallIcon>Find<SmallIcon $w={36}><Chevron /></SmallIcon></SmallRow>
            <SmallRow><SmallIcon $w={25}><ReplaceIcon /></SmallIcon>Replace</SmallRow>
            <SmallRow><SmallIcon $w={25}><CursorIcon /></SmallIcon>Select<SmallIcon $w={18}><Chevron /></SmallIcon></SmallRow>
          </SmallCol>
        </GroupBody>
        <GroupFooter><GroupName>Editing</GroupName></GroupFooter>
      </Group>

      <CollapseRibbon><CollapseIcon /></CollapseRibbon>
    </Ribbon>

    <Banner>
      <InfoIcon />
      <BannerTitle>GET GENUINE OFFICE</BannerTitle>
      <BannerLink>Your license isn't genuine, and you may be a victim of software counterfeiting. Avoid interruption and keep your files safe with genuine Office today.</BannerLink>
      <BannerButton $w={166} $ml={24}>Get genuine Office</BannerButton>
      <BannerButton $w={116} $ml={11}>Learn more</BannerButton>
      <BannerClose><BannerX /></BannerClose>
    </Banner>

    <Workspace>
      <Canvas>
        <Sheet>
          {DOC_LINES.map(line => <DocLine key={line}>{line}</DocLine>)}
          <DocLine>dsbyGGSBSUsuhudhfsduf<Caret /></DocLine>
          <PasteOptions>
            <PasteIcon small />
            (Ctrl)
            <PasteCaret><Tri color="#555" w={7} /></PasteCaret>
          </PasteOptions>
        </Sheet>
      </Canvas>
      <Scrollbar>
        <ScrollArrow><Tri up color="#666" w={9} /></ScrollArrow>
        <ScrollThumb />
        <ScrollTrack />
        <ScrollArrow><Tri color="#666" w={9} /></ScrollArrow>
      </Scrollbar>
    </Workspace>

    <StatusBar>
      <StatusText $ml={9}>Page 1 of 1</StatusText>
      <StatusText $ml={26}>1 word</StatusText>
      <StatusText $ml={24}>English (India)</StatusText>
      <StatusText $ml={22}><AccessibilityIcon />Accessibility: Good to go</StatusText>
      <StatusRight>
        <ViewBtn><ReadIcon /></ViewBtn>
        <ViewBtn $active><PrintIcon /></ViewBtn>
        <ViewBtn><WebIcon /></ViewBtn>
        <ZoomBox>
          <ZoomSign>−</ZoomSign>
          <ZoomTrack><ZoomThumb /></ZoomTrack>
          <ZoomSign>+</ZoomSign>
          <ZoomValue>100%</ZoomValue>
        </ZoomBox>
      </StatusRight>
    </StatusBar>

    <Taskbar>
      <TaskSlot $w={60}><WindowsLogo /></TaskSlot>
      <TaskSlot $w={60}><SearchGlyph /></TaskSlot>
      <SlotGap />
      <TaskSlot $open><ExplorerLogo /></TaskSlot>
      <TaskSlot><CalcLogo /></TaskSlot>
      <TaskSlot><TerminalLogo /></TaskSlot>
      <TaskSlot><PenguinLogo /></TaskSlot>
      <TaskSlot $open $active><WordLogo /></TaskSlot>
      <TaskSlot><ChromeLogo /></TaskSlot>
      <TaskSlot $open><EdgeLogo /></TaskSlot>
      <TaskSlot $open><VSCodeLogo /></TaskSlot>
      <TaskSlot $open>
        <WhatsAppLogo />
        <CountBadge $left={30} $top={24}>1</CountBadge>
      </TaskSlot>
      <TaskSlot $open><GitLogo /></TaskSlot>
      <TaskSlot $open><FirefoxLogo /></TaskSlot>
      <Tray>
        <TrayIcon $w={26}><TrayCaret /></TrayIcon>
        <TrayIcon $w={36}><WifiIcon /></TrayIcon>
        <TrayIcon $w={22}><BatteryIcon /></TrayIcon>
        <TrayIcon $w={38}><MuteIcon /></TrayIcon>
        <TrayLang>ENG</TrayLang>
        <Clock>08:29 PM<br />18-04-2023</Clock>
        <Notify>
          <NotifyIcon />
          <CountBadge $left={21} $top={25}>1</CountBadge>
        </Notify>
        <ShowDesktop />
      </Tray>
    </Taskbar>
  </Page>
);

export default App;
